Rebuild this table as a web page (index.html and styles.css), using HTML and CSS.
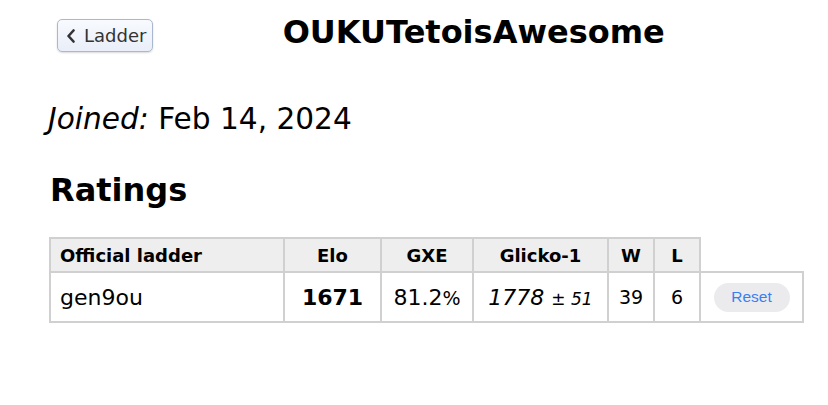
FILE: index.html
```html
<!DOCTYPE html>
<html>
<head>
<meta charset="utf-8">
<link rel="stylesheet" href="styles.css">
</head>
<body>
<div class="page">
  <header class="top">
    <button class="back"><svg class="chev" width="10" height="14" viewBox="0 0 10 14"><path d="M7.5 1.5 L2.5 7 L7.5 12.5" fill="none" stroke="#333" stroke-width="2.6" stroke-linecap="round" stroke-linejoin="round"/></svg>Ladder</button>
    <h1 class="title">OUKUTetoisAwesome</h1>
  </header>
  <p class="joined"><em>Joined:</em> Feb 14, 2024</p>
  <h2 class="ratings">Ratings</h2>
  <table class="ladder">
    <colgroup>
      <col class="w-name"><col class="w-elo"><col class="w-gxe"><col class="w-gl"><col class="w-w"><col class="w-l"><col class="w-reset">
    </colgroup>
    <tr class="head">
      <th class="left">Official ladder</th>
      <th>Elo</th>
      <th>GXE</th>
      <th>Glicko-1</th>
      <th>W</th>
      <th>L</th>
      <th class="empty"></th>
    </tr>
    <tr class="row">
      <td class="left">gen9ou</td>
      <td><strong>1671</strong></td>
      <td>81.2<small class="pct">%</small></td>
      <td><em>1778 <small>± 51</small></em></td>
      <td class="num">39</td>
      <td class="num">6</td>
      <td><button class="reset">Reset</button></td>
    </tr>
  </table>
</div>
</body>
</html>
```
FILE: styles.css
```css
html, body { margin: 0; padding: 0; background: #fff; }
body { font-family: "DejaVu Sans", Verdana, sans-serif; color: #000; }
.page { padding: 0 26px 0 49px; }
.top { display: flex; align-items: flex-start; height: 52px; }
.back {
  box-sizing: border-box;
  display: flex; align-items: center; gap: 8px;
  height: 33px; margin: 19px 0 0 8px; padding: 0 6px 0 8px;
  font-family: "DejaVu Sans", Verdana, sans-serif; font-size: 18px; color: #333;
  background: linear-gradient(#f8fafe, #e9eef8);
  border: 1px solid #a9b7cf; border-radius: 5px;
  box-shadow: 0 1px 2px rgba(0,0,0,0.15);
}
.chev { display: block; }
.title { flex: 1; margin: 13px 0 0 0; text-align: center; font-size: 32px; line-height: 38px; font-weight: bold; padding-right: 8px; }
.joined { margin: 49px 0 0 -1px; font-size: 29.6px; line-height: 36px; }
.ratings { margin: 34px 0 0 1px; font-size: 32px; line-height: 38px; }
.ladder { margin-top: 28px; border-collapse: collapse; table-layout: fixed; width: 753px; }
.w-name { width: 234px; }
.w-elo { width: 97px; }
.w-gxe { width: 92px; }
.w-gl { width: 135px; }
.w-w { width: 46px; }
.w-l { width: 46px; }
.w-reset { width: 103px; }
.ladder th, .ladder td { border: 2px solid #d0d0d0; padding: 0; text-align: center; white-space: nowrap; }
.ladder .left { text-align: left; padding-left: 9px; }
.head th { background: #eeeeee; height: 32px; font-size: 18px; font-weight: bold; }
.head th.empty { background: #fff; border: none; border-bottom: 2px solid #d0d0d0; }
.row td { height: 48px; font-size: 22px; }
.row td.num { font-size: 19px; }
small { font-size: 17px; }
small.pct { font-size: 19px; }
.reset {
  font-family: "Liberation Sans", Arial, sans-serif; font-size: 15.5px; color: #3a7ff0;
  background: #ebebee; border: none; border-radius: 15px;
  width: 76px; height: 29px; padding: 0;
}
```
